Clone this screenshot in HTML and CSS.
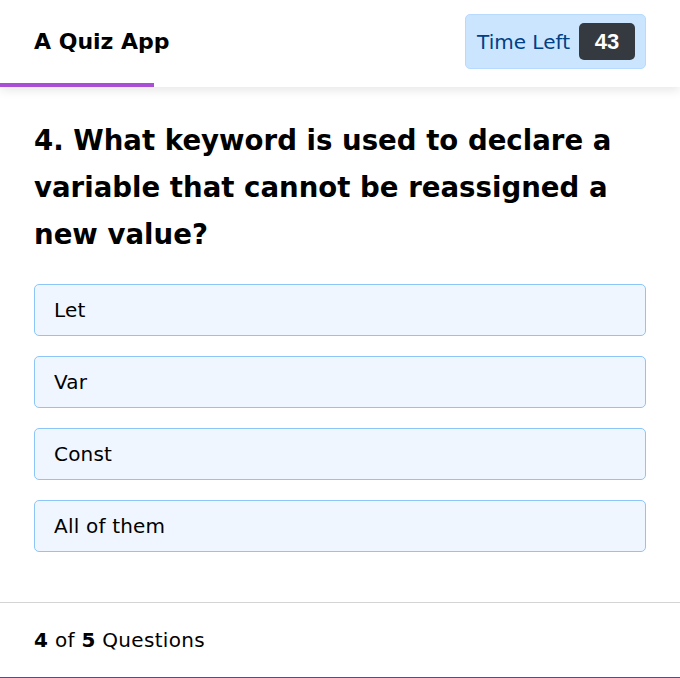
FILE: index.html
```html
<!DOCTYPE html>
<html>
<head>
<meta charset="utf-8">
<link rel="stylesheet" href="styles.css">
</head>
<body>
<div class="card">
  <header class="header">
    <div class="header-row">
      <h1 class="title">A Quiz App</h1>
      <div class="timer">
        <span class="timer-label">Time Left</span>
        <span class="timer-badge">43</span>
      </div>
    </div>
    <div class="progress"><div class="progress-bar" style="width:154px"></div></div>
  </header>
  <main class="body">
    <h2 class="question">4. What keyword is used to declare a variable that cannot be reassigned a new value?</h2>
    <ul class="options">
      <li class="option">Let</li>
      <li class="option">Var</li>
      <li class="option">Const</li>
      <li class="option">All of them</li>
    </ul>
  </main>
  <footer class="footer">
    <span><b>4</b> of <b>5</b> Questions</span>
  </footer>
</div>
</body>
</html>
```

FILE: styles.css
```css
* { box-sizing: border-box; }
html, body { margin: 0; padding: 0; }
body {
  background: #6a3d9a;
  font-family: "DejaVu Sans", Verdana, sans-serif;
  color: #000;
}
.card {
  background: #fff;
  height: 677px;
  display: flex;
  flex-direction: column;
}
.header {
  position: relative;
  z-index: 1;
  box-shadow: 0 3px 10px rgba(0,0,0,0.1);
  background: #fff;
}
.header-row {
  height: 83px;
  display: flex;
  align-items: center;
  justify-content: space-between;
  padding: 0 34px;
}
.title {
  margin: 0;
  font-size: 22px;
  font-weight: 700;
}
.timer {
  display: flex;
  align-items: center;
  gap: 9px;
  height: 55px;
  padding: 0 10px 0 11px;
  background: #cce5ff;
  border: 1px solid #b8daff;
  border-radius: 5px;
  color: #004085;
  font-size: 20px;
}
.timer-badge {
  display: flex;
  align-items: center;
  justify-content: center;
  width: 56px;
  height: 37px;
  background: #343a40;
  color: #fff;
  border-radius: 5px;
  font-family: "Liberation Sans", Arial, sans-serif;
  font-weight: 700;
  font-size: 22px;
}
.progress { height: 4px; }
.progress-bar { height: 4px; background: #a94fd5; }
.body {
  flex: 1;
  padding: 30px 34px 0;
}
.question {
  margin: 0;
  font-size: 27.6px;
  font-weight: 700;
  line-height: 47px;
}
.options {
  list-style: none;
  margin: 26px 0 0;
  padding: 0;
  display: flex;
  flex-direction: column;
  gap: 20px;
}
.option {
  height: 52px;
  display: flex;
  align-items: center;
  padding: 0 19px;
  background: #eff6ff;
  border: 1px solid #8ec5f7;
  border-radius: 5px;
  font-size: 20px;
  letter-spacing: 0.2px;
}
.footer {
  height: 75px;
  border-top: 1px solid #d4d4d4;
  display: flex;
  align-items: center;
  padding: 0 34px;
  font-size: 20px;
  letter-spacing: 0.3px;
}
.footer b { font-weight: 700; }
```
